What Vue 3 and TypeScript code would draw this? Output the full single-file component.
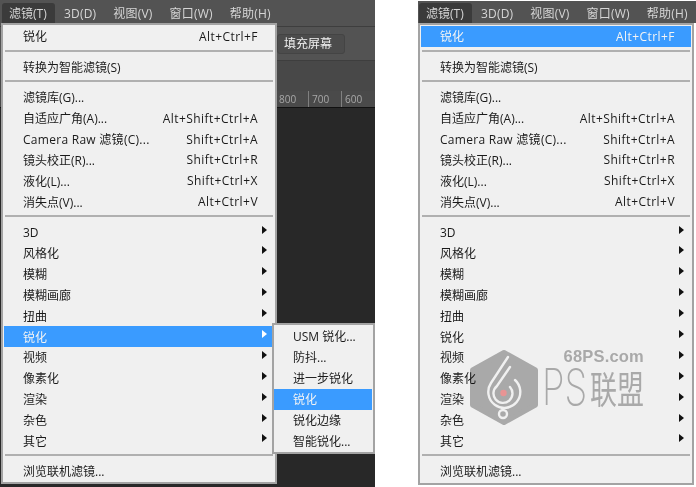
<script setup lang="ts">
type Row =
  | { kind: 'sep' }
  | { kind: 'item'; label: string; key?: string; sub?: boolean; wide?: boolean }

const rows: Row[] = [
  { kind: 'item', label: '锐化', key: 'Alt+Ctrl+F' },
  { kind: 'sep' },
  { kind: 'item', label: '转换为智能滤镜(S)' },
  { kind: 'sep' },
  { kind: 'item', label: '滤镜库(G)...' },
  { kind: 'item', label: '自适应广角(A)...', key: 'Alt+Shift+Ctrl+A' },
  { kind: 'item', label: 'Camera Raw 滤镜(C)...', key: 'Shift+Ctrl+A', wide: true },
  { kind: 'item', label: '镜头校正(R)...', key: 'Shift+Ctrl+R' },
  { kind: 'item', label: '液化(L)...', key: 'Shift+Ctrl+X' },
  { kind: 'item', label: '消失点(V)...', key: 'Alt+Ctrl+V' },
  { kind: 'sep' },
  ...['3D', '风格化', '模糊', '模糊画廊', '扭曲', '锐化', '视频', '像素化', '渲染', '杂色', '其它'].map(
    (label): Row => ({ kind: 'item', label, sub: true }),
  ),
  { kind: 'sep' },
  { kind: 'item', label: '浏览联机滤镜...' },
]

const subItems = ['USM 锐化...', '防抖...', '进一步锐化', '锐化', '锐化边缘', '智能锐化...']
const bar = ['3D(D)', '视图(V)', '窗口(W)', '帮助(H)']
const ruler = ['800', '700', '600']
const panels = [
  { id: 'left', hot: 16 },
  { id: 'right', hot: 0 },
]
</script>

<template>
  <div class="page">
    <section v-for="p in panels" :key="p.id" class="panel" :class="`panel-${p.id}`">
      <header class="menubar">
        <span class="bar-active">滤镜(T)</span>
        <span v-for="b in bar" :key="b" class="bar-item">{{ b }}</span>
      </header>

      <template v-if="p.id === 'left'">
        <div class="options">
          <span class="fill-btn">填充屏幕</span>
        </div>
        <div class="tabs"></div>
        <div class="ruler">
          <span v-for="r in ruler" :key="r" class="tick">{{ r }}</span>
        </div>
        <div class="canvas"></div>
      </template>

      <nav class="menu">
        <template v-for="(r, i) in rows" :key="i">
          <div v-if="r.kind === 'sep'" class="sep"></div>
          <div v-else class="row" :class="{ hot: i === p.hot }">
            <span class="label" :class="{ wide: r.wide }">{{ r.label }}</span>
            <span v-if="r.key" class="key">{{ r.key }}</span>
            <i v-if="r.sub" class="arrow"></i>
          </div>
        </template>
      </nav>

      <nav v-if="p.id === 'left'" class="submenu">
        <div v-for="s in subItems" :key="s" class="sub-row" :class="{ hot: s === '锐化' }">{{ s }}</div>
      </nav>

      <div v-if="p.id === 'right'" class="mark">
        <svg class="mark-logo" width="72" height="79" viewBox="0 0 72 79" fill="none">
          <path d="M36 4.5 L67.5 22 V57 L36 74.5 L4.5 57 V22 Z" fill="#b4b4b4" stroke="#b4b4b4" stroke-width="5" stroke-linejoin="round" />
          <g stroke="#fff" stroke-width="2.4" stroke-linecap="round" fill="none">
            <path d="M40 9 L23 35 A16 16 0 1 0 47 32" />
            <path d="M42 19 L29 38 A9.5 9.5 0 1 0 42 39" />
            <circle cx="35" cy="66" r="4" />
          </g>
          <circle cx="35.5" cy="45" r="3.2" fill="#f79d9d" />
        </svg>
        <div class="mark-text">
          <div class="mark-site">68PS.com</div>
          <div class="mark-name"><span class="mark-ps">PS</span><span class="mark-cn">联盟</span></div>
        </div>
      </div>
    </section>
  </div>
</template>

<style>
html, body { margin: 0; background: #fff; }
</style>

<style scoped>
.page {
  width: 696px;
  height: 487px;
  display: flex;
  gap: 43px;
  overflow: hidden;
  background: #fff;
  font-family: "Open Sans", "Noto Sans CJK SC", sans-serif;
  font-size: 12px;
  color: #1a1a1a;
}
.panel { position: relative; display: flex; flex-direction: column; }
.panel-left { width: 375px; height: 487px; background: #535353; }
.panel-right { width: 278px; height: 487px; padding-top: 1px; box-sizing: border-box; }

.menubar {
  height: 27px;
  flex: none;
  box-sizing: border-box;
  border-bottom: 1px solid #3e3e3e;
  padding: 3px 0 0 2px;
  display: flex;
  align-items: flex-start;
  color: #d6d6d6;
  background: #535353;
  line-height: 21px;
}
.panel-right .menubar { height: 22px; border-bottom: 0; padding: 2px 0 0 1px; }
.bar-active {
  flex: none;
  width: 53px;
  height: 20px;
  box-sizing: border-box;
  padding-left: 7px;
  margin-right: 9px;
  background: #3b3b3b;
  border-radius: 3px 3px 0 0;
  white-space: nowrap;
}
.bar-item { flex: none; white-space: nowrap; margin-right: 17px; letter-spacing: 0.2px; }
.bar-item:last-child { margin-right: 0; }

.options {
  height: 34px;
  flex: none;
  box-sizing: border-box;
  border-bottom: 1px solid #3e3e3e;
  padding: 7px 0 0 277px;
  background: #535353;
}
.fill-btn {
  display: block;
  width: 68px;
  height: 20px;
  box-sizing: border-box;
  border: 1px solid #444;
  border-radius: 3px;
  background: #4c4c4c;
  color: #f0f0f0;
  padding-left: 6px;
  line-height: 18px;
  white-space: nowrap;
}
.tabs { height: 30px; flex: none; background: #484848; }
.ruler {
  height: 16px;
  flex: none;
  display: flex;
  padding-left: 275px;
  background: #4a4a4a;
  color: #a8a8a8;
  font-size: 10px;
  line-height: 16px;
}
.tick {
  width: 33px;
  flex: none;
  box-sizing: border-box;
  padding-left: 3px;
  border-left: 1px solid #808080;
}
.canvas { flex: 1; background: #282828; border-top: 1px solid #111; }

.menu {
  position: absolute;
  left: 1px;
  top: 23px;
  width: 276px;
  height: 461px;
  box-sizing: border-box;
  border: 2px solid #a3a3a3;
  padding-top: 1px;
  background: #f0f0f0;
}
.panel-right .menu { position: static; height: 462px; }
.row {
  height: 20.9px;
  margin: 0 1px;
  padding: 0 16px 0 19px;
  display: flex;
  align-items: center;
  white-space: nowrap;
}
.row.hot, .sub-row.hot { background: #3a9bff; color: #f4f4f4; }
.wide { letter-spacing: 0.28px; }
.key { margin-left: auto; letter-spacing: 0.45px; }
.arrow {
  margin: -5px 7px 0 auto;
  position: relative;
  left: 16px;
  width: 0;
  height: 0;
  border-left: 5px solid #111;
  border-top: 4px solid transparent;
  border-bottom: 4px solid transparent;
}
.row.hot .arrow { border-left-color: #fff; }
.sep {
  height: 2px;
  margin: 3px 2px 4.5px 2px;
  background: #b0b0b0;
}

.submenu {
  position: absolute;
  left: 272px;
  top: 323px;
  width: 103px;
  height: 131px;
  box-sizing: border-box;
  border: 2px solid #a3a3a3;
  padding-top: 1px;
  background: #f0f0f0;
}
.sub-row {
  height: 21px;
  line-height: 21px;
  padding-left: 19px;
  margin-right: 1px;
  white-space: nowrap;
}

.mark {
  position: absolute;
  left: 50px;
  top: 345px;
  width: 176px;
  height: 82px;
  display: flex;
  gap: 2px;
  mix-blend-mode: multiply;
  pointer-events: none;
}
.mark-logo { margin-top: 3px; flex: none; }
.mark-text { width: 102px; display: flex; flex-direction: column; align-items: flex-end; }
.mark-site {
  font-family: "Liberation Sans", sans-serif;
  font-weight: 700;
  font-size: 16.5px;
  line-height: 23px;
  letter-spacing: 0.2px;
  color: #b4b4b4;
}
.mark-name {
  display: flex;
  width: 102px;
  height: 40px;
  color: #b4b4b4;
  line-height: 40px;
  white-space: nowrap;
}
.mark-ps {
  width: 48px;
  font-family: Inter, sans-serif;
  font-size: 27px;
  font-weight: 200;
  transform: scale(1.35, 1.85);
  transform-origin: left center;
}
.mark-cn {
  width: 54px;
  font-family: "Noto Sans CJK SC", sans-serif;
  font-size: 27px;
  transform: scaleY(1.4);
}
</style>
